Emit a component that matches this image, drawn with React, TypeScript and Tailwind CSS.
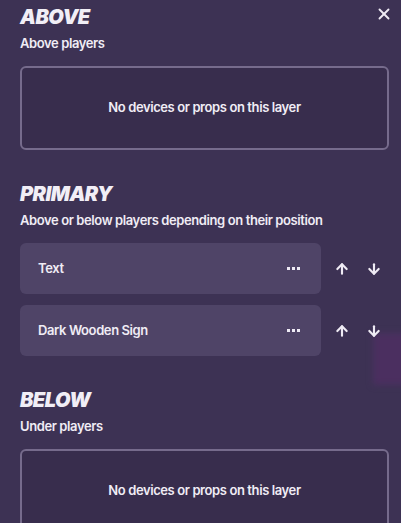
import { X, ArrowUp, ArrowDown } from 'lucide-react'

// Panel de capas: secciones Above / Primary / Below con sus elementos.

interface LayerItem { id: string; name: string }
interface Layer { key: string; title: string; subtitle: string; items: LayerItem[] }

const LAYERS: Layer[] = [
  { key: 'above', title: 'ABOVE', subtitle: 'Above players', items: [] },
  {
    key: 'primary',
    title: 'PRIMARY',
    subtitle: 'Above or below players depending on their position',
    items: [
      { id: 'text', name: 'Text' },
      { id: 'sign', name: 'Dark Wooden Sign' },
    ],
  },
  { key: 'below', title: 'BELOW', subtitle: 'Under players', items: [] },
]

function Dots() {
  return (
    <span className="flex items-center gap-[2px]">
      <span className="w-[3px] h-[3px] bg-[#eeeaf4]" />
      <span className="w-[3px] h-[3px] bg-[#eeeaf4]" />
      <span className="w-[3px] h-[3px] bg-[#eeeaf4]" />
    </span>
  )
}

function Section({ layer }: { layer: Layer }) {
  return (
    <section className="flex flex-col">
      <h2 className="text-[20px] leading-[24px] font-black italic tracking-[-0.5px] text-[#f1eef6]">{layer.title}</h2>
      <p className="mt-[5px] text-[13px] leading-[18px] font-semibold tracking-[-0.4px] text-[#f0ecf5]">{layer.subtitle}</p>
      {layer.items.length === 0 ? (
        <div className="mt-[14px] h-[84px] rounded-[6px] border-2 border-[#766b8c] bg-[#382d4d] flex items-center justify-center">
          <span className="text-[13px] font-semibold tracking-[-0.4px] text-[#f0ecf5]">No devices or props on this layer</span>
        </div>
      ) : (
        <div className="mt-[14px] flex flex-col gap-[11px]">
          {layer.items.map((it) => (
            <div key={it.id} className="flex items-center">
              <div className="w-[301px] h-[51px] rounded-[6px] bg-[#4f4467] flex items-center pl-[18px] pr-[21px]">
                <span className="flex-1 text-[13px] font-semibold tracking-[-0.4px] text-[#f0ecf5]">{it.name}</span>
                <Dots />
              </div>
              <ArrowUp className="ml-[13px] w-[16px] h-[16px] text-[#efebf4]" strokeWidth={3.2} />
              <ArrowDown className="ml-[16px] w-[16px] h-[16px] text-[#efebf4]" strokeWidth={3.2} />
            </div>
          ))}
        </div>
      )}
    </section>
  )
}

export default function App() {
  return (
    <div
      className="relative w-[401px] h-[523px] overflow-hidden bg-[#3d3254] px-[20px] pt-[5px]"
      style={{ fontFamily: 'Inter, "Liberation Sans", sans-serif' }}
    >
      <div className="absolute right-[-10px] top-[333px] w-[38px] h-[52px] bg-[#4b2f60] blur-[3px]" />
      <button className="absolute right-[8px] top-[5px] text-[#efebf4]" title="Close">
        <X className="w-[18px] h-[18px]" strokeWidth={2.5} />
      </button>
      <div className="relative flex flex-col gap-[32px] w-[369px]">
        {LAYERS.map((l) => <Section key={l.key} layer={l} />)}
      </div>
    </div>
  )
}
